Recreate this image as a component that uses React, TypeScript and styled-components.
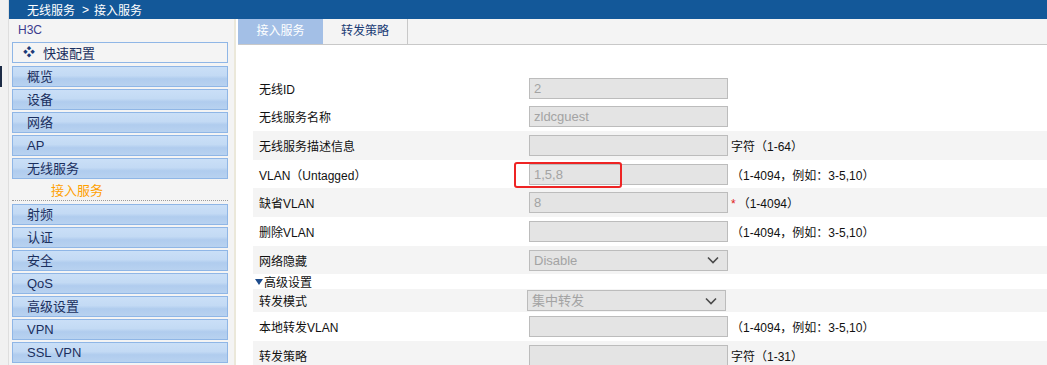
import styled, { createGlobalStyle } from 'styled-components';

const GlobalStyle = createGlobalStyle`
	html, body {
		margin: 0;
		padding: 0;
		background: #ffffff;
		overflow: hidden;
	}
	body {
		font-family: "Liberation Sans", "Noto Sans CJK SC", sans-serif;
		font-size: 12px;
	}
`;

const FONT = `"Liberation Sans", "Noto Sans CJK SC", sans-serif`;

const Page = styled.div`
	display: flex;
	width: 1047px;
	height: 365px;
	overflow: hidden;
`;

const Strip = styled.div`
	flex: 0 0 8px;
	background: #f1f1f1;
	border-right: 1px solid #dedede;
`;

const StripMark = styled.div`
	width: 2px;
	height: 21px;
	margin-top: 66px;
	background: #1c2b46;
`;

const Frame = styled.div`
	flex: 1;
	display: flex;
	flex-direction: column;
	min-width: 0;
`;

const Header = styled.div`
	flex: 0 0 19px;
	display: flex;
	align-items: center;
	height: 19px;
	background: #135899;
	color: #ffffff;
	font-family: ${FONT};
	font-size: 12px;
	padding-left: 18px;
	white-space: nowrap;
`;

const Crumb = styled.span`
	margin: 0 5px 0 7px;
`;

const Body = styled.div`
	flex: 1 0 auto;
	display: flex;
`;

const Sidebar = styled.div`
	flex: 0 0 219px;
	background: #f4f4f4;
	padding: 0 3px 0 3px;
	border-right: 2px solid #ebe8da;
`;

const Brand = styled.div`
	height: 23px;
	line-height: 23px;
	padding-left: 6px;
	color: #3b3b8e;
	font-size: 12px;
`;

const QuickItem = styled.div`
	box-sizing: border-box;
	width: 216px;
	height: 21px;
	margin-bottom: 3px;
	border: 1px solid #8fb6e6;
	background: #f4f4f4;
	display: flex;
	align-items: center;
	gap: 8px;
	padding-left: 10px;
	color: #1b2f5e;
	font-size: 13px;
`;

const Diamond = styled.span`
	color: #1d3a78;
	font-size: 12px;
	line-height: 1;
`;

const NavItem = styled.div`
	box-sizing: border-box;
	width: 216px;
	height: 21px;
	margin-bottom: 2px;
	border: 1px solid #8fb6e6;
	background: linear-gradient(#cadff7 0%, #c3daf4 45%, #b0ccee 62%, #b8d2f0 100%);
	padding-left: 14px;
	line-height: 19px;
	color: #1b2f5e;
	font-size: 13px;
`;

const SubItem = styled.div`
	box-sizing: border-box;
	width: 216px;
	height: 20px;
	margin-bottom: 3px;
	border-bottom: 1px dotted #9a9a9a;
	padding-left: 39px;
	line-height: 19px;
	color: #ffa000;
	font-size: 13px;
`;

const Main = styled.div`
	flex: 1;
	min-width: 0;
	background: #ffffff;
	padding-left: 2px;
`;

const TabBar = styled.div`
	display: flex;
	height: 25px;
	background: #f4f4f4;
	border-bottom: 1px solid #c8c8c8;
`;

const Tab = styled.div<{ $active?: boolean }>`
	box-sizing: border-box;
	width: 85px;
	height: 25px;
	line-height: 25px;
	text-align: center;
	font-size: 12px;
	background: ${({ $active }) => ($active ? '#a3bfe6' : 'transparent')};
	color: ${({ $active }) => ($active ? '#ffffff' : '#1a3b74')};
	border-right: ${({ $active }) => ($active ? 'none' : '1px solid #c8c8c8')};
`;

const Form = styled.div`
	padding: 29px 0 0 15px;
`;

const Row = styled.div<{ $shade?: boolean; $h?: number }>`
	display: grid;
	grid-template-columns: 276px 202px 1fr;
	align-items: center;
	height: ${({ $h }) => $h ?? 29}px;
	background: ${({ $shade }) => ($shade ? '#f4f4f4' : '#ffffff')};
`;

const Label = styled.div`
	padding-left: 6px;
	color: #111111;
	font-size: 12px;
	white-space: nowrap;
`;

const Cell = styled.div`
	position: relative;
	display: flex;
	align-items: center;
`;

const Field = styled.div`
	box-sizing: border-box;
	width: 199px;
	height: 21px;
	background: #e4e4e4;
	border: 1px solid #bcbcbc;
	padding-left: 4px;
	line-height: 19px;
	color: #a3a3a3;
	font-size: 13px;
`;

const Select = styled(Field)<{ $shift?: number }>`
	display: flex;
	align-items: center;
	justify-content: space-between;
	padding-right: 8px;
	margin-left: ${({ $shift }) => $shift ?? 0}px;
`;

const Hint = styled.div`
	color: #111111;
	font-size: 12px;
	white-space: nowrap;
`;

const Star = styled.span`
	color: #e02020;
	margin-right: 2px;
`;

const Callout = styled.div`
	position: absolute;
	left: -15px;
	top: -2px;
	width: 108px;
	height: 26px;
	box-sizing: border-box;
	border: 2.5px solid #ee2424;
	border-radius: 3px;
	pointer-events: none;
`;

const Section = styled.div`
	display: flex;
	align-items: center;
	height: 15px;
	font-size: 12px;
	color: #111111;
	padding-left: 2px;
`;

const Caret = styled.span`
	width: 0;
	height: 0;
	border-left: 4px solid transparent;
	border-right: 4px solid transparent;
	border-top: 6px solid #1d4c8c;
	margin-right: 1px;
`;

const Chevron = () => (
	<svg width="12" height="8" viewBox="0 0 12 8">
		<polyline points="1,1.5 6,6.5 11,1.5" fill="none" stroke="#4a4a4a" strokeWidth="1.6" />
	</svg>
);

const navTop = ['概览', '设备', '网络', 'AP', '无线服务'];
const navBottom = ['射频', '认证', '安全', 'QoS', '高级设置', 'VPN', 'SSL VPN'];

const RANGE = '（1-4094，例如：3-5,10）';

export default function App() {
	return (
		<>
			<GlobalStyle />
			<Page>
				<Strip>
					<StripMark />
				</Strip>
				<Frame>
					<Header>
						无线服务<Crumb>&gt;</Crumb>接入服务
					</Header>
					<Body>
						<Sidebar>
							<Brand>H3C</Brand>
							<QuickItem>
								<Diamond>❖</Diamond>快速配置
							</QuickItem>
							{navTop.map((n) => (
								<NavItem key={n}>{n}</NavItem>
							))}
							<SubItem>接入服务</SubItem>
							{navBottom.map((n) => (
								<NavItem key={n}>{n}</NavItem>
							))}
						</Sidebar>
						<Main>
							<TabBar>
								<Tab $active>接入服务</Tab>
								<Tab>转发策略</Tab>
							</TabBar>
							<Form>
								<Row $h={28}>
									<Label>无线ID</Label>
									<Cell><Field>2</Field></Cell>
									<Hint />
								</Row>
								<Row>
									<Label>无线服务名称</Label>
									<Cell><Field>zldcguest</Field></Cell>
									<Hint />
								</Row>
								<Row $shade>
									<Label>无线服务描述信息</Label>
									<Cell><Field /></Cell>
									<Hint>字符（1-64）</Hint>
								</Row>
								<Row $h={28}>
									<Label>VLAN（Untagged）</Label>
									<Cell>
										<Field>1,5,8</Field>
										<Callout />
									</Cell>
									<Hint>{RANGE}</Hint>
								</Row>
								<Row $shade>
									<Label>缺省VLAN</Label>
									<Cell><Field>8</Field></Cell>
									<Hint><Star>*</Star>（1-4094）</Hint>
								</Row>
								<Row>
									<Label>删除VLAN</Label>
									<Cell><Field /></Cell>
									<Hint>{RANGE}</Hint>
								</Row>
								<Row $shade $h={28}>
									<Label>网络隐藏</Label>
									<Cell>
										<Select>
											Disable
											<Chevron />
										</Select>
									</Cell>
									<Hint />
								</Row>
								<Section>
									<Caret />高级设置
								</Section>
								<Row $shade $h={23}>
									<Label>转发模式</Label>
									<Cell>
										<Select $shift={-2}>
											集中转发
											<Chevron />
										</Select>
									</Cell>
									<Hint />
								</Row>
								<Row>
									<Label>本地转发VLAN</Label>
									<Cell><Field /></Cell>
									<Hint>{RANGE}</Hint>
								</Row>
								<Row $shade>
									<Label>转发策略</Label>
									<Cell><Field /></Cell>
									<Hint>字符（1-31）</Hint>
								</Row>
							</Form>
						</Main>
					</Body>
				</Frame>
			</Page>
		</>
	);
}
